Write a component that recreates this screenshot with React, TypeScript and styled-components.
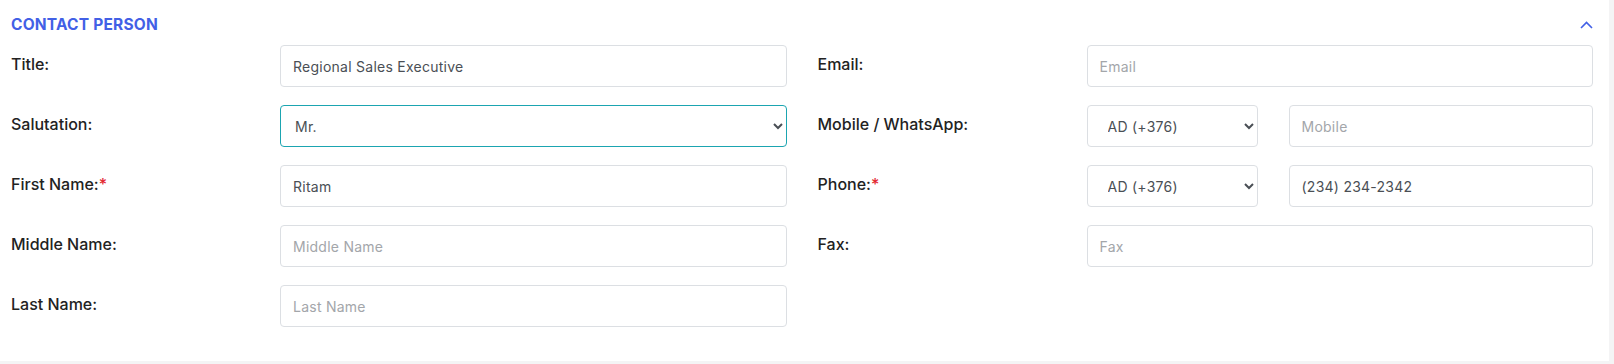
import React from "react";
import styled, { createGlobalStyle } from "styled-components";

const GlobalStyle = createGlobalStyle`
  html, body {
    margin: 0;
    padding: 0;
    background: #f4f4f5;
    font-family: Inter, "Open Sans", sans-serif;
  }
`;

const Page = styled.div`
  padding: 0 5px 3px 0;
`;

const Card = styled.section`
  background: #ffffff;
  padding: 0 16px 34px 11px;
`;

const Header = styled.div`
  height: 45px;
  display: flex;
  align-items: center;
  justify-content: space-between;
  padding-top: 4px;
  box-sizing: border-box;
`;

const Heading = styled.h2`
  margin: 0;
  font-size: 15.5px;
  font-weight: 700;
  color: #4260e6;
  letter-spacing: 0.2px;
`;

const Toggle = styled.button`
  border: 0;
  background: none;
  padding: 0;
  display: flex;
  cursor: pointer;
`;

const Columns = styled.div`
  display: grid;
  grid-template-columns: 1fr 1fr;
  column-gap: 31px;
`;

const Column = styled.div`
  display: flex;
  flex-direction: column;
  gap: 18px;
`;

const Field = styled.div`
  display: grid;
  grid-template-columns: 269px 1fr;
  align-items: start;
`;

const Label = styled.label`
  padding-top: 8px;
  font-size: 16px;
  font-weight: 500;
  color: #222;
  line-height: 22px;
`;

const Required = styled.span`
  color: #e3262f;
`;

const controlStyles = `
  box-sizing: border-box;
  width: 100%;
  height: 42px;
  border: 1px solid #dcdfe3;
  border-radius: 4px;
  background: #fff;
  font-family: Inter, "Open Sans", sans-serif;
  font-size: 14px;
  letter-spacing: 0.25px;
  color: #4a4f55;
  outline: none;
`;

const Input = styled.input`
  ${controlStyles}
  padding: 0 12px;
  &::placeholder {
    color: #a3a6aa;
  }
`;

const Select = styled.select<{ $focused?: boolean; $pad?: number }>`
  ${controlStyles}
  padding: 0 4px 0 ${(p) => p.$pad ?? 10}px;
  border-color: ${(p) => (p.$focused ? "#1ba5b1" : "#dcdfe3")};
`;

const Split = styled.div`
  display: grid;
  grid-template-columns: 171px 1fr;
  column-gap: 31px;
`;

const ChevronUp = () => (
  <svg width="13" height="8" viewBox="0 0 13 8" fill="none">
    <polyline points="1,7 6.5,1.5 12,7" stroke="#4260e6" strokeWidth="1.6" />
  </svg>
);

export default function App() {
  return (
    <Page>
      <GlobalStyle />
      <Card>
        <Header>
          <Heading>CONTACT PERSON</Heading>
          <Toggle aria-label="Collapse">
            <ChevronUp />
          </Toggle>
        </Header>
        <Columns>
          <Column>
            <Field>
              <Label>Title:</Label>
              <Input defaultValue="Regional Sales Executive" />
            </Field>
            <Field>
              <Label>Salutation:</Label>
              <Select $focused defaultValue="Mr.">
                <option>Mr.</option>
                <option>Mrs.</option>
                <option>Ms.</option>
              </Select>
            </Field>
            <Field>
              <Label>
                First Name:<Required>*</Required>
              </Label>
              <Input defaultValue="Ritam" />
            </Field>
            <Field>
              <Label>Middle Name:</Label>
              <Input placeholder="Middle Name" />
            </Field>
            <Field>
              <Label>Last Name:</Label>
              <Input placeholder="Last Name" />
            </Field>
          </Column>
          <Column>
            <Field>
              <Label>Email:</Label>
              <Input placeholder="Email" />
            </Field>
            <Field>
              <Label>Mobile / WhatsApp:</Label>
              <Split>
                <Select $pad={16} defaultValue="AD (+376)">
                  <option>AD (+376)</option>
                </Select>
                <Input placeholder="Mobile" />
              </Split>
            </Field>
            <Field>
              <Label>
                Phone:<Required>*</Required>
              </Label>
              <Split>
                <Select $pad={16} defaultValue="AD (+376)">
                  <option>AD (+376)</option>
                </Select>
                <Input defaultValue="(234) 234-2342" />
              </Split>
            </Field>
            <Field>
              <Label>Fax:</Label>
              <Input placeholder="Fax" />
            </Field>
          </Column>
        </Columns>
      </Card>
    </Page>
  );
}
